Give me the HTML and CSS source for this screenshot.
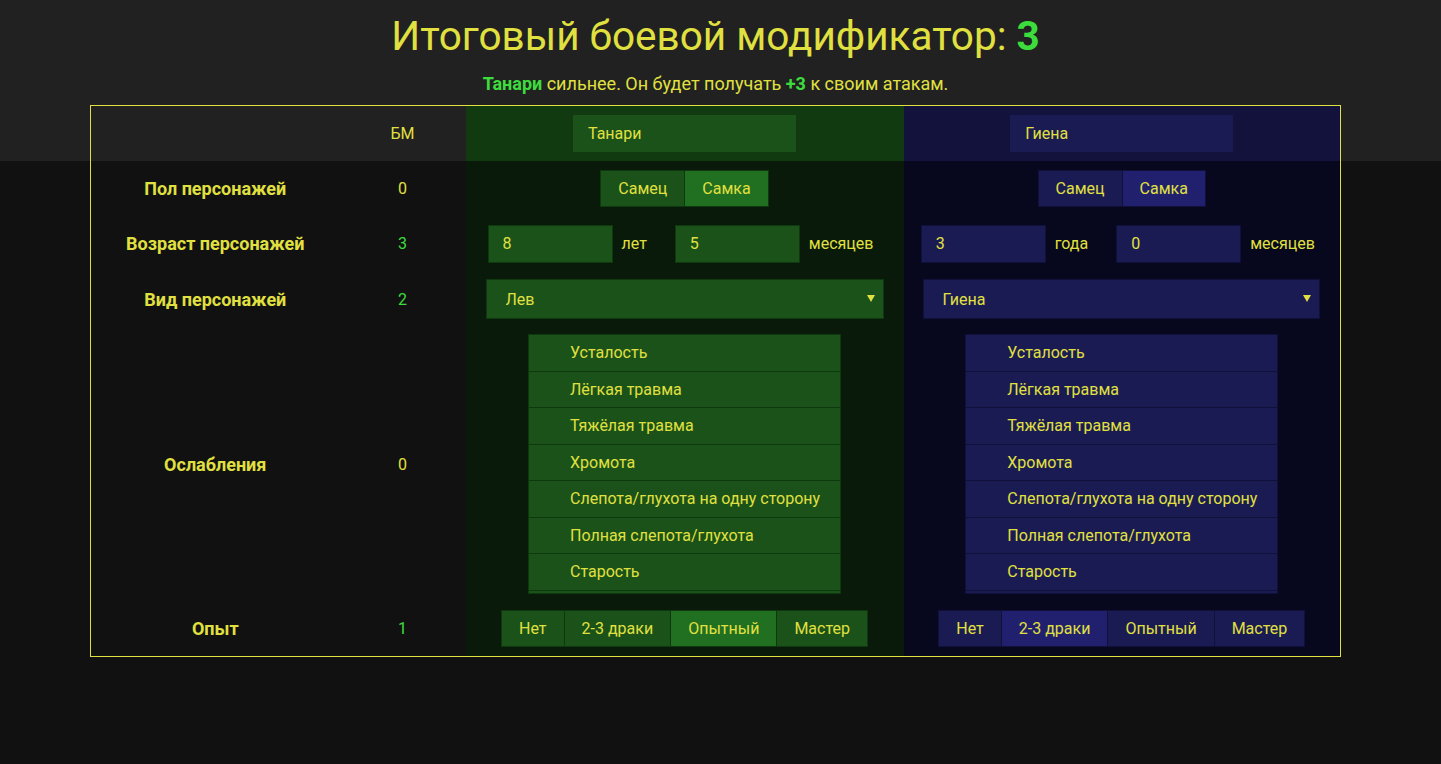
FILE: index.html
```html
<!DOCTYPE html>
<html lang="ru">
<head>
<meta charset="utf-8">
<title>Итоговый боевой модификатор</title>
<link rel="stylesheet" href="styles.css">
</head>
<body>
<div class="page">
  <header class="top">
    <h1 class="title">Итоговый боевой модификатор: <b class="good">3</b></h1>
    <p class="verdict"><b class="good">Танари</b> сильнее. Он будет получать <b class="good">+3</b> к своим атакам.</p>
  </header>

  <table class="grid">
    <colgroup>
      <col class="c-label">
      <col class="c-bm">
      <col class="c-side">
      <col>
    </colgroup>
    <tr class="r-head">
      <td></td>
      <td class="bm">БМ</td>
      <td class="side-a head"><input class="name" type="text" value="Танари"></td>
      <td class="side-b head"><input class="name" type="text" value="Гиена"></td>
    </tr>
    <tr class="r-55">
      <th>Пол персонажей</th>
      <td class="bm">0</td>
      <td class="side-a">
        <div class="seg"><button>Самец</button><button class="on">Самка</button></div>
      </td>
      <td class="side-b">
        <div class="seg"><button>Самец</button><button class="on">Самка</button></div>
      </td>
    </tr>
    <tr class="r-55">
      <th>Возраст персонажей</th>
      <td class="bm good">3</td>
      <td class="side-a">
        <div class="age">
          <span class="pair"><input class="num" type="text" value="8"><span class="unit">лет</span></span>
          <span class="pair"><input class="num" type="text" value="5"><span class="unit">месяцев</span></span>
        </div>
      </td>
      <td class="side-b">
        <div class="age">
          <span class="pair"><input class="num" type="text" value="3"><span class="unit">года</span></span>
          <span class="pair"><input class="num" type="text" value="0"><span class="unit">месяцев</span></span>
        </div>
      </td>
    </tr>
    <tr class="r-56">
      <th>Вид персонажей</th>
      <td class="bm good">2</td>
      <td class="side-a">
        <div class="pick"><select><option>Лев</option></select></div>
      </td>
      <td class="side-b">
        <div class="pick"><select><option>Гиена</option></select></div>
      </td>
    </tr>
    <tr class="r-list">
      <th>Ослабления</th>
      <td class="bm">0</td>
      <td class="side-a">
        <ul class="list">
          <li>Усталость</li>
          <li>Лёгкая травма</li>
          <li>Тяжёлая травма</li>
          <li>Хромота</li>
          <li>Слепота/глухота на одну сторону</li>
          <li>Полная слепота/глухота</li>
          <li>Старость</li>
        </ul>
      </td>
      <td class="side-b">
        <ul class="list">
          <li>Усталость</li>
          <li>Лёгкая травма</li>
          <li>Тяжёлая травма</li>
          <li>Хромота</li>
          <li>Слепота/глухота на одну сторону</li>
          <li>Полная слепота/глухота</li>
          <li>Старость</li>
        </ul>
      </td>
    </tr>
    <tr class="r-55">
      <th>Опыт</th>
      <td class="bm good">1</td>
      <td class="side-a">
        <div class="seg"><button>Нет</button><button>2-3 драки</button><button class="on">Опытный</button><button>Мастер</button></div>
      </td>
      <td class="side-b">
        <div class="seg"><button>Нет</button><button class="on">2-3 драки</button><button>Опытный</button><button>Мастер</button></div>
      </td>
    </tr>
  </table>
</div>
</body>
</html>
```

FILE: styles.css
```css
html, body {
  margin: 0;
  padding: 0;
}

body {
  min-height: 764px;
  background: linear-gradient(to bottom, #212121 0, #212121 161px, #111111 161px, #111111 100%);
  font-family: Roboto, "Noto Sans", "Liberation Sans", sans-serif;
  color: #e0e040;
  padding-right: 10px;
}

.page {
  width: 1251px;
  margin: 0 auto;
}

.top {
  text-align: center;
}

.title {
  margin: 12px 0 0;
  font-size: 40.5px;
  font-weight: 400;
  line-height: 49px;
}

.title b {
  font-weight: 700;
}

.good {
  color: #3ddc3d;
}

.verdict {
  margin: 12px 0 0;
  font-size: 18px;
  line-height: 21px;
}

.grid {
  margin-top: 11px;
  width: 1251px;
  border-collapse: collapse;
  border: 1px solid #e0e040;
  table-layout: fixed;
}

.c-label { width: 249px; }
.c-bm { width: 126px; }
.c-side { width: 438px; }

.grid td, .grid th {
  padding: 0;
  text-align: center;
  vertical-align: middle;
  font-size: 16px;
}

.grid th {
  font-weight: 700;
  font-size: 18px;
}

.r-head td { height: 55px; }
.r-55 td, .r-55 th { height: 55px; }
.r-56 td, .r-56 th { height: 56px; }
.r-list td, .r-list th { height: 274px; }

.bm {
  font-weight: 400;
}

.side-a { background: #0a1a0a; }
.side-b { background: #07071d; }
.side-a.head { background: #113a11; }
.side-b.head { background: #12123c; }

input, select, button {
  font-family: inherit;
  font-size: 16px;
  color: #e0e040;
  margin: 0;
  outline: none;
}

.name {
  box-sizing: border-box;
  width: 223px;
  height: 37px;
  padding: 0 15px;
  border: 0;
}

.side-a .name { background: #1a521a; }
.side-b .name { background: #1b1b54; }

/* segmented buttons */
.seg {
  display: inline-flex;
}

.seg button {
  box-sizing: border-box;
  height: 37px;
  padding: 0 17px;
  border: 1px solid;
  cursor: pointer;
}

.seg button + button {
  margin-left: -1px;
}

.side-a .seg button { background: #1a521a; border-color: #0e380e; }
.side-a .seg button.on { background: #216f21; }
.side-b .seg button { background: #1b1b54; border-color: #10103a; }
.side-b .seg button.on { background: #20206f; }

/* age */
.age {
  display: flex;
  justify-content: center;
  align-items: center;
  padding-right: 8px;
}

.pair {
  display: inline-flex;
  align-items: center;
}

.pair + .pair {
  margin-left: 28px;
}

.num {
  box-sizing: border-box;
  width: 125px;
  height: 38px;
  padding: 0 14px;
  border: 1px solid;
}

.side-a .num { background: #1a521a; border-color: #0e380e; }
.side-b .num { background: #1b1b54; border-color: #10103a; }

.unit {
  margin-left: 9px;
}

/* species select */
.pick {
  position: relative;
  margin: 0 20px 0 20px;
}

.side-b .pick {
  margin: 0 20px 0 19px;
}

.pick select {
  display: block;
  box-sizing: border-box;
  width: 100%;
  height: 40px;
  padding: 0 19px;
  border: 1px solid;
  -webkit-appearance: none;
  appearance: none;
  cursor: pointer;
}

.side-a .pick select { background: #1a521a; border-color: #0e380e; }
.side-b .pick select { background: #1b1b54; border-color: #10103a; }

.pick::after {
  content: "";
  position: absolute;
  right: 9px;
  top: 16px;
  border-left: 4px solid transparent;
  border-right: 4px solid transparent;
  border-top: 7px solid #e0e040;
  pointer-events: none;
}

/* weakness list */
.list {
  list-style: none;
  box-sizing: border-box;
  width: 313px;
  margin: 0 auto;
  padding: 0 0 2px;
  border: 1px solid;
  text-align: left;
}

.list li {
  height: 35.5px;
  line-height: 35.5px;
  padding-left: 41px;
  border-bottom: 1px solid;
}

.side-a .list { background: #1a521a; border-color: #0e380e; }
.side-a .list li { border-color: #0e380e; }
.side-b .list { background: #1b1b54; border-color: #10103a; }
.side-b .list li { border-color: #10103a; }
```
